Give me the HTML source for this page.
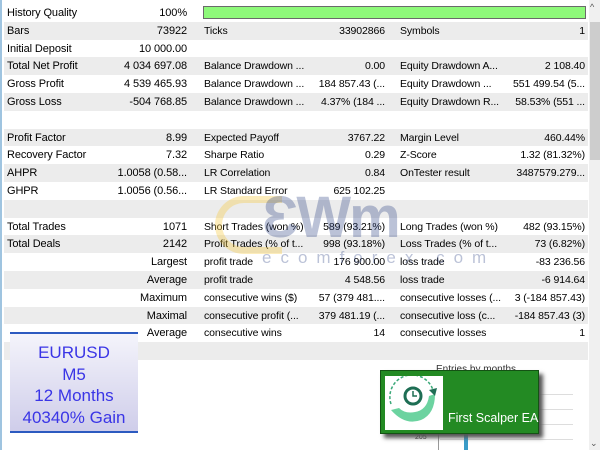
<!DOCTYPE html><html><head><style>
body{margin:0;width:600px;height:450px;overflow:hidden;background:#fff;font-family:"Liberation Sans",sans-serif;font-size:11px;color:#000;position:relative}
.r{position:absolute;left:4px;width:584px;height:17.8px}
.g{background:#ececec}
.t{position:absolute;top:3px;white-space:nowrap;letter-spacing:-0.1px}
.v{text-align:right}
</style></head><body>
<div style="position:absolute;left:0;top:0;width:2px;height:450px;background:#9fc4e0"></div>
<div style="position:absolute;left:589px;top:0;width:11px;height:450px;background:#f0f0f0"></div>
<div style="position:absolute;left:590px;top:22px;width:10px;height:138px;background:#cdcdcd"></div>
<div style="position:absolute;left:590px;top:2px;font-size:9px;color:#555">&#94;</div>
<div style="position:absolute;left:590px;top:438px;font-size:9px;color:#555">&#8964;</div>
<div id="rows"></div>
<script>
var R=[
["History Quality","100%","","","",""],
["Bars","73922","Ticks","33902866","Symbols","1"],
["Initial Deposit","10 000.00","","","",""],
["Total Net Profit","4 034 697.08","Balance Drawdown ...","0.00","Equity Drawdown A...","2 108.40"],
["Gross Profit","4 539 465.93","Balance Drawdown ...","184 857.43 (...","Equity Drawdown ...","551 499.54 (5..."],
["Gross Loss","-504 768.85","Balance Drawdown ...","4.37% (184 ...","Equity Drawdown R...","58.53% (551 ..."],
["","","","","",""],
["Profit Factor","8.99","Expected Payoff","3767.22","Margin Level","460.44%"],
["Recovery Factor","7.32","Sharpe Ratio","0.29","Z-Score","1.32 (81.32%)"],
["AHPR","1.0058 (0.58...","LR Correlation","0.84","OnTester result","3487579.279..."],
["GHPR","1.0056 (0.56...","LR Standard Error","625 102.25","",""],
["","","","","",""],
["Total Trades","1071","Short Trades (won %)","589 (93.21%)","Long Trades (won %)","482 (93.15%)"],
["Total Deals","2142","Profit Trades (% of t...","998 (93.18%)","Loss Trades (% of t...","73 (6.82%)"],
["","Largest","profit trade","176 900.00","loss trade","-83 236.56"],
["","Average","profit trade","4 548.56","loss trade","-6 914.64"],
["","Maximum","consecutive wins ($)","57 (379 481....","consecutive losses (...","3 (-184 857.43)"],
["","Maximal","consecutive profit (...","379 481.19 (...","consecutive loss (c...","-184 857.43 (3)"],
["","Average","consecutive wins","14","consecutive losses","1"],
["","","","","",""]];
var h="";
R.forEach(function(r,i){
var y=4+i*17.8;
h+='<div class="r'+(i%2?' g':'')+'" style="top:'+y+'px">'+
'<span class="t" style="left:3px">'+r[0]+'</span>'+
'<span class="t v" style="right:401px">'+r[1]+'</span>'+
'<span class="t" style="left:200px;font-size:10.5px">'+r[2]+'</span>'+
'<span class="t v" style="right:203px;font-size:10.5px">'+r[3]+'</span>'+
'<span class="t" style="left:396px;font-size:10.5px">'+r[4]+'</span>'+
'<span class="t v" style="right:3px;font-size:10.5px">'+r[5]+'</span></div>';
});
document.getElementById("rows").innerHTML=h;
</script>
<div style="position:absolute;left:203px;top:6px;width:383px;height:13px;background:#8ef97a;border:1px solid #6a6a6a;box-sizing:border-box"></div>
<!-- watermark -->
<div style="position:absolute;left:215px;top:196px;width:60px;height:44px;border:7px solid rgba(245,200,60,.35);border-right:none;border-radius:30px 0 0 30px"></div>
<div style="position:absolute;left:262px;top:188px;font-size:58px;font-weight:bold;color:rgba(60,80,140,.35);letter-spacing:-2px;line-height:60px">ƐWm</div>
<div style="position:absolute;left:262px;top:248px;font-size:17px;color:rgba(60,80,140,.35);letter-spacing:9px">ecomforex.com</div>
<!-- chart -->
<div style="position:absolute;left:436px;top:364px;font-size:10px;color:#333">Entries by months</div>
<div style="position:absolute;left:438px;top:380px;width:1px;height:70px;background:#999"></div>
<div style="position:absolute;left:440px;top:380px;width:133px;height:70px;background:repeating-linear-gradient(#fff 0 14px,#ddd 14px 15px)"></div>
<div style="position:absolute;left:464px;top:430px;width:4px;height:20px;background:#3a9cc8"></div>
<div style="position:absolute;left:415px;top:434px;font-size:7px;color:#333">205</div>
<!-- green box -->
<div style="position:absolute;left:380px;top:370px;width:159px;height:64px;background:#238a23;border:1px solid #145214;box-sizing:border-box;box-shadow:4px 4px 4px #555">
<div style="position:absolute;left:4px;top:5px;width:58px;height:54px;background:#fff">
<svg width="58" height="54" viewBox="0 0 58 54"><path d="M6 28 A22 22 0 0 1 48 14" fill="none" stroke="#3aa878" stroke-dasharray="3 2" stroke-width="1.5"/><circle cx="28" cy="20" r="8" fill="#fff" stroke="#1e6e54" stroke-width="3"/><path d="M28 15v5h4" stroke="#1e6e54" stroke-width="1.5" fill="none"/><path d="M6 34 Q20 50 36 44 Q50 38 50 18 L44 20 Q42 34 30 36 Q20 38 14 32 Z" fill="#6cd3a0"/><path d="M44 14 L52 12 L50 20Z" fill="#1e6e54"/></svg></div>
<div style="position:absolute;left:67px;top:40px;color:#fff;font-size:12.5px;white-space:nowrap">First Scalper EA</div></div>
<!-- blue box -->
<div style="position:absolute;left:10px;top:332px;width:128px;height:101px;background:linear-gradient(#f4f4fb,#cfcdea);border-top:2px solid #2c5ac0;border-bottom:2px solid #2c5ac0;box-sizing:border-box;text-align:center;color:#3a35e6;font-size:17px;line-height:21.7px;padding-top:8px">EURUSD<br>M5<br>12 Months<br>40340% Gain</div>
</body></html>
